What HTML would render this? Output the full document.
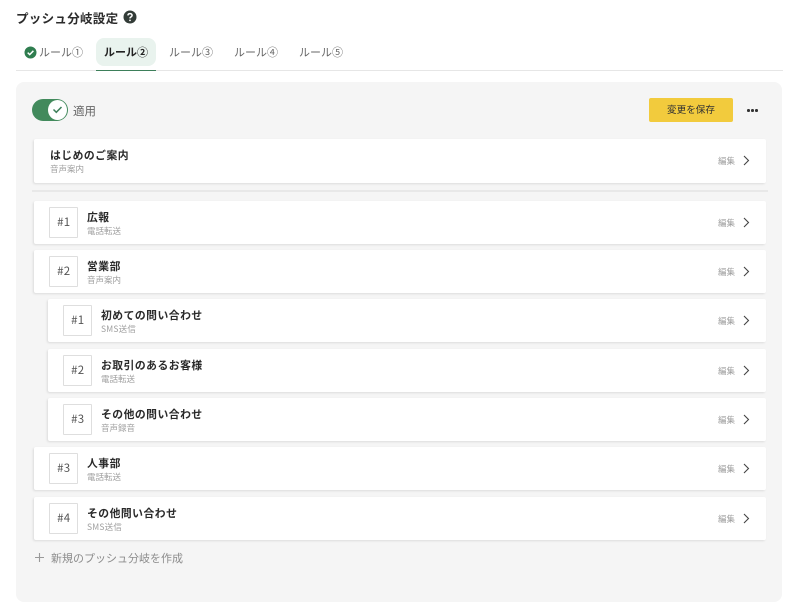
<!DOCTYPE html>
<html lang="ja"><head><meta charset="utf-8"><style>
*{box-sizing:border-box}
html,body{margin:0;padding:0;background:#fff}
body{width:799px;height:577px;overflow:hidden;position:relative;font-family:"Liberation Sans","Noto Sans CJK JP",sans-serif;color:#222}
.a{position:absolute;white-space:nowrap}
.panel{position:absolute;left:16px;top:82px;width:766px;height:520px;background:#f5f5f5;border-radius:8px}
.card{position:absolute;background:#fff;height:43px;border-radius:2px;box-shadow:-1px 1px 2px rgba(0,0,0,.1)}
.num{position:absolute;left:15.300px;top:6px;width:29px;height:31px;border:1.500px solid #dedede;border-radius:1px;font-family:"Noto Sans CJK JP",sans-serif;font-size:11.500px;line-height:28px;text-align:center;color:#555;letter-spacing:.3px}
.t{position:absolute;font-size:10.800px;letter-spacing:.5px;font-weight:700;line-height:14px;top:10px;color:#2a2a2a;white-space:nowrap}
.s{position:absolute;font-family:"Noto Sans CJK JP",sans-serif;font-size:8.500px;line-height:11px;top:24.500px;color:#a0a0a0;white-space:nowrap}
.e{position:absolute;right:31px;top:16px;font-size:8.500px;line-height:12px;color:#a0a0a0}
.c{position:absolute;right:16px;top:16px}
.tab{position:absolute;top:46px;font-size:11px;line-height:14px;color:#666;white-space:nowrap}
</style></head><body>
<div class="a" style="left:16px;top:11px;font-size:12.500px;line-height:16px;font-weight:700;letter-spacing:.3px;color:#2b2b2b">プッシュ分岐設定</div>
<svg class="a" style="left:123px;top:10px" width="14" height="14" viewBox="0 0 14 14"><circle cx="7" cy="7" r="6.500" fill="#333c38"/><path d="M4.900 5.400C5 4.200 5.900 3.600 7 3.600c1.200 0 2.100.7 2.100 1.800 0 1.500-2.100 1.500-2.100 3" fill="none" stroke="#fff" stroke-width="1.500"/><circle cx="7" cy="10.400" r=".9" fill="#fff"/></svg>

<svg class="a" style="left:24px;top:46px" width="13" height="13" viewBox="0 0 13 13"><circle cx="6.500" cy="6.500" r="6" fill="#2f7d4f"/><path d="M3.700 6.600l2 2 3.700-3.800" fill="none" stroke="#fff" stroke-width="1.500"/></svg>
<div class="tab" style="left:39px">ルール①</div>
<div class="a" style="left:96px;top:38px;width:60px;height:28px;background:#e9f3ee;border-radius:8px"></div>
<div class="tab" style="left:104px;font-weight:700;color:#222">ルール②</div>
<div class="tab" style="left:169px">ルール③</div>
<div class="tab" style="left:234px">ルール④</div>
<div class="tab" style="left:299px">ルール⑤</div>
<div class="a" style="left:16px;top:70px;width:767px;height:1px;background:#e6e6e6"></div>
<div class="a" style="left:96px;top:70px;width:60px;height:1px;background:#3d7f5a"></div>

<div class="panel"></div>
<div class="a" style="left:32px;top:99px;width:36px;height:22px;background:#428a5c;border-radius:11px"></div>
<div class="a" style="left:48px;top:100px;width:19px;height:20px;background:#fff;border-radius:50%"></div>
<svg class="a" style="left:51px;top:104px" width="13" height="11" viewBox="0 0 13 11"><path d="M2.500 5.500l2.800 2.800 5.200-5.300" fill="none" stroke="#3d7f5a" stroke-width="1.500"/></svg>
<div class="a" style="left:73px;top:104.500px;font-size:11.500px;line-height:14px;color:#666">適用</div>
<div class="a" style="left:649px;top:98px;width:84px;height:24px;background:#f2cb3d;border-radius:2px;font-size:9.600px;line-height:26px;text-align:center;color:#333">変更を保存</div>
<div class="a" style="left:747px;top:109px;width:2.500px;height:2.500px;border-radius:50%;background:#333;box-shadow:4px 0 0 #333,8px 0 0 #333"></div>

<div class="card" style="left:34px;top:139px;width:732px;height:44px"><div class="t" style="left:16px;top:10px">はじめのご案内</div><div class="s" style="left:16px;top:25px">音声案内</div><div class="e">編集</div><svg class="c" style="top:16px" width="8" height="11" viewBox="0 0 8 11"><path d="M2 1l4.500 4.500L2 10" fill="none" stroke="#444" stroke-width="1.100"/></svg></div>
<div class="a" style="left:32px;top:190px;width:736px;height:2px;background:#e8e8e8"></div>

<div class="card" style="left:34px;top:201px;width:732px"><div class="num">#1</div><div class="t" style="left:53px">広報</div><div class="s" style="left:53px">電話転送</div><div class="e">編集</div><svg class="c" width="8" height="11" viewBox="0 0 8 11"><path d="M2 1l4.500 4.500L2 10" fill="none" stroke="#444" stroke-width="1.100"/></svg></div>
<div class="card" style="left:34px;top:250px;width:732px"><div class="num">#2</div><div class="t" style="left:53px">営業部</div><div class="s" style="left:53px">音声案内</div><div class="e">編集</div><svg class="c" width="8" height="11" viewBox="0 0 8 11"><path d="M2 1l4.500 4.500L2 10" fill="none" stroke="#444" stroke-width="1.100"/></svg></div>
<div class="card" style="left:48px;top:299px;width:718px"><div class="num">#1</div><div class="t" style="left:53px">初めての問い合わせ</div><div class="s" style="left:53px;letter-spacing:.2px">SMS送信</div><div class="e">編集</div><svg class="c" width="8" height="11" viewBox="0 0 8 11"><path d="M2 1l4.500 4.500L2 10" fill="none" stroke="#444" stroke-width="1.100"/></svg></div>
<div class="card" style="left:48px;top:349px;width:718px"><div class="num">#2</div><div class="t" style="left:53px">お取引のあるお客様</div><div class="s" style="left:53px">電話転送</div><div class="e">編集</div><svg class="c" width="8" height="11" viewBox="0 0 8 11"><path d="M2 1l4.500 4.500L2 10" fill="none" stroke="#444" stroke-width="1.100"/></svg></div>
<div class="card" style="left:48px;top:398px;width:718px"><div class="num">#3</div><div class="t" style="left:53px">その他の問い合わせ</div><div class="s" style="left:53px">音声録音</div><div class="e">編集</div><svg class="c" width="8" height="11" viewBox="0 0 8 11"><path d="M2 1l4.500 4.500L2 10" fill="none" stroke="#444" stroke-width="1.100"/></svg></div>
<div class="card" style="left:34px;top:447px;width:732px"><div class="num">#3</div><div class="t" style="left:53px">人事部</div><div class="s" style="left:53px">電話転送</div><div class="e">編集</div><svg class="c" width="8" height="11" viewBox="0 0 8 11"><path d="M2 1l4.500 4.500L2 10" fill="none" stroke="#444" stroke-width="1.100"/></svg></div>
<div class="card" style="left:34px;top:497px;width:732px"><div class="num">#4</div><div class="t" style="left:53px">その他問い合わせ</div><div class="s" style="left:53px;letter-spacing:.2px">SMS送信</div><div class="e">編集</div><svg class="c" width="8" height="11" viewBox="0 0 8 11"><path d="M2 1l4.500 4.500L2 10" fill="none" stroke="#444" stroke-width="1.100"/></svg></div>

<svg class="a" style="left:34px;top:552px" width="11" height="11" viewBox="0 0 11 11"><path d="M5.500 1v9M1 5.500h9" stroke="#999" stroke-width="1.100"/></svg>
<div class="a" style="left:51px;top:552px;font-size:11px;line-height:15px;color:#8c8c8c">新規のプッシュ分岐を作成</div>
</body></html>
